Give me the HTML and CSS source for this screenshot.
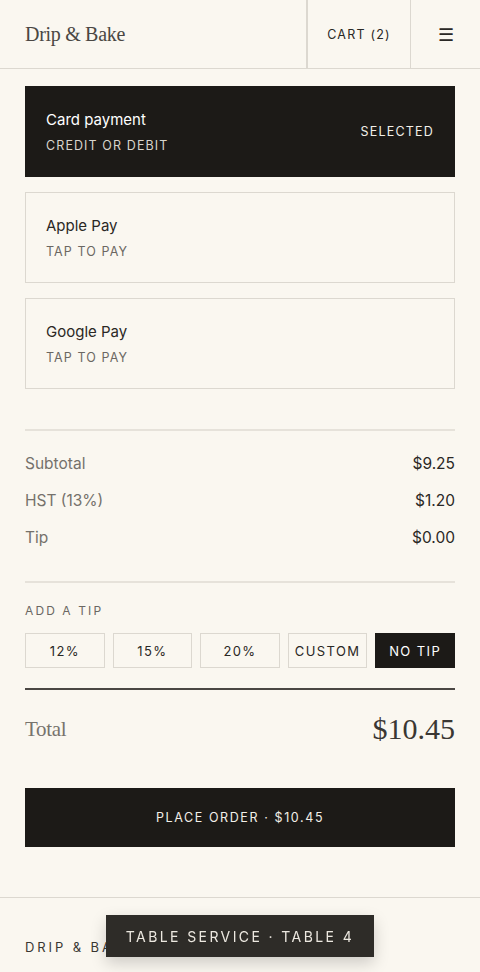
FILE: index.html
```html
<!DOCTYPE html>
<html lang="en">
<head>
  <meta charset="UTF-8">
  <meta name="viewport" content="width=device-width, initial-scale=1.0">
  <title>Drip &amp; Bake · Checkout</title>
  <link rel="stylesheet" href="styles.css">
</head>
<body>

  <!-- Header -->
  <header class="topbar">
    <div class="brand">Drip &amp; Bake</div>
    <div class="cart">CART (2)</div>
    <div class="menu">&#9776;</div>
  </header>

  <main class="checkout">
    <!-- Payment methods -->
    <div class="pay-option selected">
      <div>
        <div class="pay-title">Card payment</div>
        <div class="pay-sub">CREDIT OR DEBIT</div>
      </div>
      <span class="pay-tag">SELECTED</span>
    </div>
    <div class="pay-option">
      <div>
        <div class="pay-title">Apple Pay</div>
        <div class="pay-sub">TAP TO PAY</div>
      </div>
    </div>
    <div class="pay-option">
      <div>
        <div class="pay-title">Google Pay</div>
        <div class="pay-sub">TAP TO PAY</div>
      </div>
    </div>

    <!-- Summary -->
    <div class="summary">
      <div class="row"><span>Subtotal</span><span class="amt">$9.25</span></div>
      <div class="row"><span>HST (13%)</span><span class="amt">$1.20</span></div>
      <div class="row"><span>Tip</span><span class="amt">$0.00</span></div>
    </div>

    <!-- Tip -->
    <div class="tip">
      <div class="tip-label">ADD A TIP</div>
      <div class="tip-options">
        <button class="tip-btn">12%</button>
        <button class="tip-btn">15%</button>
        <button class="tip-btn">20%</button>
        <button class="tip-btn">CUSTOM</button>
        <button class="tip-btn active">NO TIP</button>
      </div>
    </div>

    <div class="total">
      <span class="total-label">Total</span>
      <span class="total-amt">$10.45</span>
    </div>

    <button class="place-order">PLACE ORDER · $10.45</button>
  </main>

  <footer class="footer">
    <div class="footer-brand">DRIP &amp; BAKE</div>
  </footer>

  <div class="toast">TABLE SERVICE · TABLE 4</div>

</body>
</html>
```

FILE: styles.css
```css
    /* General Styling */
    body {
      font-family: Inter, "Noto Sans", sans-serif;
      margin: 0;
      background-color: #faf7f0;
      color: #1c1a17;
    }

    /* Header */
    .topbar {
      display: flex;
      height: 69px;
      border-bottom: 1px solid #dcd8d0;
      box-sizing: border-box;
    }

    .brand {
      flex: 1;
      display: flex;
      align-items: center;
      padding-left: 25px;
      font-family: "Liberation Serif", serif;
      font-size: 20px;
      color: #4a4743;
      letter-spacing: -0.3px;
    }

    .cart {
      width: 102px;
      display: flex;
      align-items: center;
      justify-content: center;
      border-left: 2px solid #dcd8d0;
      font-size: 12.5px;
      letter-spacing: 1.2px;
      color: #2a2825;
    }

    .menu {
      width: 69px;
      display: flex;
      align-items: center;
      justify-content: center;
      border-left: 1px solid #dcd8d0;
      font-size: 18px;
      color: #2a2825;
    }

    .checkout {
      padding: 17px 25px 50px;
    }

    /* Payment options */
    .pay-option {
      display: flex;
      justify-content: space-between;
      align-items: center;
      height: 91px;
      padding: 0 20px;
      margin-bottom: 15px;
      border: 1px solid #dcd8d0;
      box-sizing: border-box;
    }

    .pay-option.selected {
      background-color: #1c1a17;
      border-color: #1c1a17;
      color: #fff;
    }

    .pay-title {
      font-size: 15px;
      color: #2a2825;
    }

    .pay-sub {
      margin-top: 9px;
      font-size: 12.5px;
      letter-spacing: 1.1px;
      color: #6b6762;
    }

    .selected .pay-title {
      color: #fff;
    }

    .selected .pay-sub {
      color: #d8d4cc;
    }

    .pay-tag {
      font-size: 12.5px;
      letter-spacing: 1.2px;
      color: #f2efe8;
    }

    /* Summary */
    .summary {
      margin-top: 40px;
      padding: 14px 0 25px;
      border-top: 2px solid #e6e2da;
      border-bottom: 2px solid #e6e2da;
    }

    .row {
      display: flex;
      justify-content: space-between;
      height: 37px;
      align-items: center;
      font-size: 15.5px;
      color: #75716b;
    }

    .amt {
      color: #2a2825;
    }

    /* Tip */
    .tip {
      padding-top: 20px;
      padding-bottom: 20px;
      border-bottom: 2px solid #4a4743;
    }

    .tip-label {
      font-size: 12px;
      letter-spacing: 2.1px;
      color: #6b6762;
      margin-bottom: 15px;
    }

    .tip-options {
      display: flex;
      gap: 8px;
    }

    .tip-btn {
      flex: 1;
      height: 35px;
      background: transparent;
      border: 1px solid #dcd8d0;
      font-family: Inter, "Noto Sans", sans-serif;
      font-size: 13px;
      letter-spacing: 1.4px;
      color: #2a2825;
      padding: 0;
    }

    .tip-btn.active {
      background-color: #1c1a17;
      border-color: #1c1a17;
      color: #fff;
    }

    /* Total */
    .total {
      display: flex;
      justify-content: space-between;
      align-items: center;
      height: 78px;
      font-family: "Liberation Serif", serif;
    }

    .total-label {
      font-size: 21px;
      color: #77736d;
      letter-spacing: -0.3px;
    }

    .total-amt {
      font-size: 30px;
      color: #3a3733;
    }

    .place-order {
      display: block;
      width: 100%;
      height: 59px;
      margin-top: 20px;
      background-color: #1c1a17;
      border: none;
      color: #f2efe8;
      font-family: Inter, "Noto Sans", sans-serif;
      font-size: 12.5px;
      letter-spacing: 1.6px;
    }

    /* Footer */
    .footer {
      border-top: 1px solid #dcd8d0;
      padding: 41px 25px 40px;
    }

    .footer-brand {
      font-size: 13px;
      letter-spacing: 2.9px;
      color: #3a3733;
    }

    .toast {
      position: fixed;
      left: 106px;
      top: 915px;
      width: 268px;
      height: 42px;
      display: flex;
      align-items: center;
      justify-content: center;
      background-color: #2e2c28;
      color: #ece8e0;
      font-size: 14px;
      letter-spacing: 2.4px;
      box-shadow: 0px 6px 16px rgba(0, 0, 0, 0.18);
    }
```
